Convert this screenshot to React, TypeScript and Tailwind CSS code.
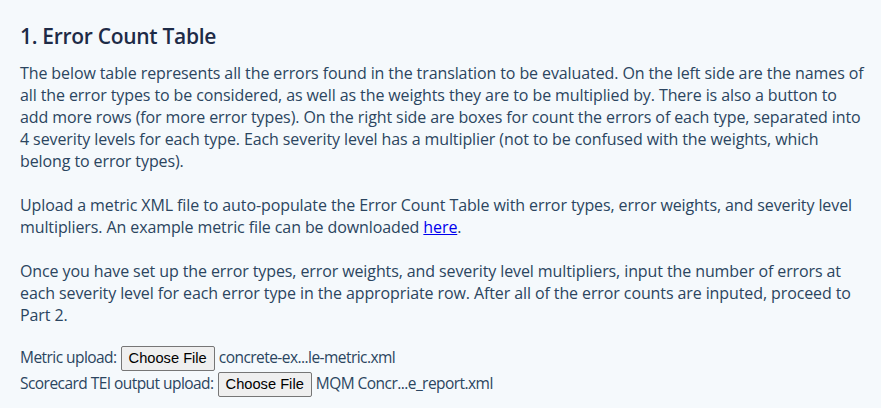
export default function App() {
  const body = "text-[16px] leading-[22px] tracking-[-0.1px] text-[#2b4560]";
  return (
    <div
      className="min-h-[408px] w-full bg-[#f5f9fc] pl-5 pr-[14px] pt-[21px]"
      style={{ fontFamily: '"Open Sans", "Noto Sans", sans-serif' }}
    >
      <h2 className="mb-[11px] text-[21px] font-semibold leading-[30px] tracking-[-0.3px] text-[#1e2b47]">
        1. Error Count Table
      </h2>
      <p className={body + " mb-[22px]"}>
        The below table represents all the errors found in the translation to be evaluated. On the left side are the names of
        all the error types to be considered, as well as the weights they are to be multiplied by. There is also a button to
        add more rows (for more error types). On the right side are boxes for count the errors of each type, separated into
        4 severity levels for each type. Each severity level has a multiplier (not to be confused with the weights, which
        belong to error types).
      </p>
      <p className={body + " mb-[22px]"}>
        Upload a metric XML file to auto-populate the Error Count Table with error types, error weights, and severity level
        multipliers. An example metric file can be downloaded{" "}
        <a href="#" className="text-[#0000ee] underline">
          here
        </a>
        .
      </p>
      <p className={body + " mb-[19px]"}>
        Once you have set up the error types, error weights, and severity level multipliers, input the number of errors at
        each severity level for each error type in the appropriate row. After all of the error counts are inputed, proceed to
        Part 2.
      </p>
      <div className="text-[15.5px] tracking-[-0.55px] text-[#2b4560]">
        <FileRow label="Metric upload:" file="concrete-ex...le-metric.xml" />
        <FileRow label="Scorecard TEI output upload:" file="MQM Concr...e_report.xml" />
      </div>
    </div>
  );
}

function FileRow({ label, file }: { label: string; file: string }) {
  return (
    <div className="flex h-[26px] items-center gap-[4px]">
      <span>{label}</span>
      <button
        className="h-[25px] rounded-[2px] border border-[#767676] bg-[#efefef] px-[7px] text-[14.67px] leading-[23px] tracking-normal text-black"
        style={{ fontFamily: '"Liberation Sans", Arial, sans-serif' }}
      >
        Choose File
      </button>
      <span>{file}</span>
    </div>
  );
}
